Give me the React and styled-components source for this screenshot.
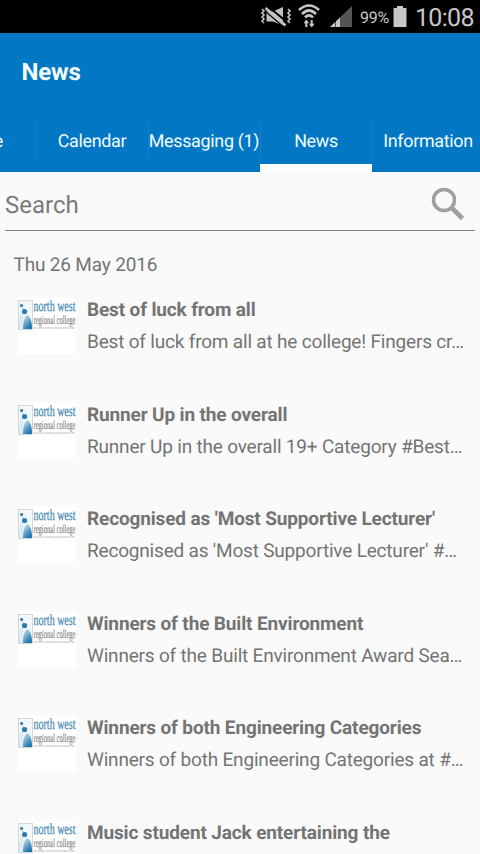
import React from "react";
import styled, { createGlobalStyle } from "styled-components";

const GlobalStyle = createGlobalStyle`
  *, *::before, *::after { box-sizing: border-box; }
  body {
    margin: 0;
    overflow: hidden;
    background: #fafafa;
    font-family: Roboto, "Noto Sans", sans-serif;
    text-rendering: geometricPrecision;
  }
`;

const Screen = styled.div`
  width: 480px;
  height: 854px;
  overflow: hidden;
  display: flex;
  flex-direction: column;
  background: #fafafa;
  color: #747474;
`;

const StatusBar = styled.div`
  flex: none;
  height: 33px;
  display: flex;
  justify-content: flex-end;
  padding-right: 7px;
  background: #000;
  color: #c8c8c8;
`;

const StatusIcon = styled.svg`
  flex: none;
  display: block;
  height: 33px;
  width: ${(p) => p.$width}px;
  margin-right: ${(p) => p.$gap}px;
`;

const BatteryLevel = styled.span`
  width: 29px;
  margin-right: 4px;
  font-size: 16px;
  line-height: 36px;
  letter-spacing: -0.3px;
  white-space: nowrap;
`;

const Clock = styled.span`
  width: 58px;
  margin-left: -1px;
  font-size: 25px;
  line-height: 38px;
  letter-spacing: -0.7px;
  white-space: nowrap;
`;

const Header = styled.header`
  flex: none;
  height: 139px;
  display: flex;
  flex-direction: column;
  justify-content: space-between;
  background: #0277c4;
  color: #f2fcff;
`;

const PageTitle = styled.h1`
  margin: 0;
  padding: 24px 21.5px 0;
  font-size: 24px;
  font-weight: 700;
  line-height: 30px;
  letter-spacing: -0.2px;
`;

const Tabs = styled.nav`
  display: flex;
  height: 54px;
  margin-left: -76px;
`;

const Tab = styled.div`
  flex: none;
  width: 112px;
  display: flex;
  justify-content: ${(p) => (p.$end ? "flex-end" : "center")};
  padding-right: ${(p) => (p.$end ? "33px" : "0")};
  border-bottom: 8px solid ${(p) => (p.$active ? "#fdfdfd" : "transparent")};
  font-size: 17.9px;
  line-height: 48px;
  letter-spacing: -0.3px;
  white-space: nowrap;
  background: linear-gradient(#1581ca, #1581ca) left top / ${(p) => (p.$first ? 0 : 1)}px 44px no-repeat;
`;

const SearchBar = styled.div`
  flex: none;
  height: 59px;
  margin: 0 5px;
  display: flex;
  justify-content: space-between;
  border-bottom: 1.5px solid #808080;
  font-size: 24px;
  line-height: 67px;
  color: #7a7a7a;
`;

const SearchIcon = styled.svg`
  width: 34px;
  height: 34px;
  margin: 15px 10px 0 0;
`;

const DateHeading = styled.h2`
  flex: none;
  margin: 0;
  padding: 20px 13.5px 0;
  height: 67px;
  font-size: 19px;
  font-weight: 400;
  line-height: 28px;
  letter-spacing: -0.17px;
`;

const NewsList = styled.div`
  flex: none;
`;

const NewsRow = styled.article`
  display: flex;
  height: 104.6px;
  padding-left: 18px;
`;

const LogoImage = styled.svg`
  flex: none;
  width: 58px;
  height: 56px;
  margin-right: 11px;
  background: #fff;
`;

const NewsText = styled.div`
  white-space: nowrap;
`;

const Headline = styled.h3`
  margin: -4px 0 0;
  font-size: 19px;
  font-weight: 700;
  line-height: 32px;
  letter-spacing: -0.14px;
`;

const Summary = styled.p`
  margin: 0;
  font-size: 19px;
  line-height: 32px;
  letter-spacing: -0.19px;
`;

const news = [
  { title: "Best of luck from all", summary: "Best of luck from all at he college! Fingers cr…" },
  { title: "Runner Up in the overall", summary: "Runner Up in the overall 19+ Category #Best…" },
  { title: "Recognised as 'Most Supportive Lecturer'", summary: "Recognised as 'Most Supportive Lecturer' #…" },
  { title: "Winners of the Built Environment", summary: "Winners of the Built Environment Award Sea…" },
  { title: "Winners of both Engineering Categories", summary: "Winners of both Engineering Categories at #…" },
  { title: "Music student Jack entertaining the", summary: "" },
];

function CollegeLogo() {
  return (
    <LogoImage viewBox="0 0 58 56">
      <defs>
        <linearGradient id="figure" x1="0" y1="0" x2="0.6" y2="1">
          <stop offset="0" stopColor="#d5e9f3" />
          <stop offset="1" stopColor="#1b72ae" />
        </linearGradient>
      </defs>
      <rect x="0.5" y="2.5" width="14" height="29" fill="#f4f7f9" stroke="#c4c8cb" strokeWidth="0.7" />
      <path d="M1 31V22Q2 14 5 14L6 31Z" fill="#dceaf1" />
      <path d="M5 31Q5 20 9 17Q14 19 14 31Z" fill="url(#figure)" />
      <path d="M4.5 10L7 14" stroke="#7fb2d0" strokeWidth="1" />
      <circle cx="3.6" cy="7.5" r="1.6" fill="#3179a5" />
      <circle cx="6.6" cy="13.5" r="2.6" fill="#267eb4" />
      <text x="15.5" y="13" fontFamily="Liberation Serif, serif" fontSize="15.5" fill="#4688b2" stroke="#4688b2" strokeWidth="0.25" textLength="42" lengthAdjust="spacingAndGlyphs">north west</text>
      <text x="15.5" y="25.8" fontFamily="Liberation Serif, serif" fontSize="12" fill="#85858a" stroke="#85858a" strokeWidth="0.2" textLength="42" lengthAdjust="spacingAndGlyphs">regional college</text>
      <path d="M16 30H57" stroke="#aaa" strokeWidth="1.2" strokeDasharray="2 .7 1 .8 3 .6" />
    </LogoImage>
  );
}

export default function App() {
  return (
    <Screen>
      <GlobalStyle />
      <StatusBar>
        <StatusIcon $width={32} $gap={6} viewBox="0 0 32 33" fill="none" stroke="#c4c4c4">
          <path d="M6.5 11.5H13L23 7V25.5L13 21.5H6.5Z" fill="#c0c0c0" stroke="none" />
          <path d="M8 6.2L28 23" stroke="#000" strokeWidth="2" />
          <path d="M5.5 8L25.5 25.5" strokeWidth="2.6" />
          <path d="M3 9.2L26 29" stroke="#000" strokeWidth="1.2" />
          <path d="M2 9L4 11L2 13L4 15L2 17L4 19L2 21L4 23M28 9L30 11L28 13L30 15L28 17L30 19L28 21L30 23" strokeWidth="1.6" />
        </StatusIcon>
        <StatusIcon $width={22} $gap={10} viewBox="0 0 22 33" fill="none" stroke="#c8c8c8">
          <path d="M1 10Q11 1 21 10M4 14Q11 7 18 14M7 17.3Q11 13.3 15 17.3" strokeWidth="2.6" />
          <path d="M8.3 27V21M13.7 20V26" strokeWidth="2" />
          <path d="M5.5 23.2L8.3 19.5L11 23.2ZM11 23.8L13.7 27.5L16.5 23.8Z" fill="#c8c8c8" stroke="none" />
        </StatusIcon>
        <StatusIcon $width={22} $gap={8} viewBox="0 0 22 33">
          <path d="M0 27L22 6V27Z" fill="#545454" />
          <path d="M0 27L5 22.3V27ZM6 27V21.3L10 17.5V27Z" fill="#c8c8c8" />
        </StatusIcon>
        <BatteryLevel>99%</BatteryLevel>
        <StatusIcon $width={14} $gap={9} viewBox="0 0 14 33">
          <path d="M4 6H10V8H13.5V27H0.5V8H4Z" fill="#c8c8c8" />
        </StatusIcon>
        <Clock>10:08</Clock>
      </StatusBar>
      <Header>
        <PageTitle>News</PageTitle>
        <Tabs>
          <Tab $first $end>Home</Tab>
          <Tab>Calendar</Tab>
          <Tab>Messaging (1)</Tab>
          <Tab $active>News</Tab>
          <Tab>Information</Tab>
        </Tabs>
      </Header>
      <SearchBar>
        Search
        <SearchIcon viewBox="0 0 34 34" fill="none" stroke="#9f9f9f">
          <circle cx="13" cy="13" r="10.5" strokeWidth="3.6" />
          <path d="M21 21L31.5 31.5" strokeWidth="4.6" />
        </SearchIcon>
      </SearchBar>
      <DateHeading>Thu 26 May 2016</DateHeading>
      <NewsList>
        {news.map((item) => (
          <NewsRow key={item.title}>
            <CollegeLogo />
            <NewsText>
              <Headline>{item.title}</Headline>
              <Summary>{item.summary}</Summary>
            </NewsText>
          </NewsRow>
        ))}
      </NewsList>
    </Screen>
  );
}
